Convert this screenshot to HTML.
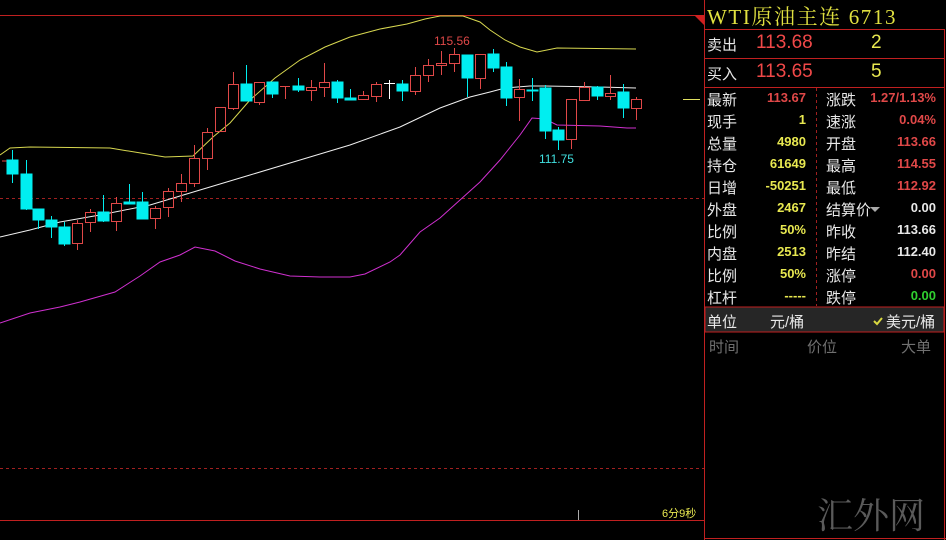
<!DOCTYPE html>
<html><head><meta charset="utf-8"><style>
html,body{margin:0;padding:0;background:#000;width:946px;height:540px;overflow:hidden}
body{position:relative;font-family:"Liberation Sans","Noto Sans CJK SC",sans-serif}
.t{position:absolute;white-space:nowrap}
.l{color:#e8e8e8;font-size:15px}
.v{font-weight:bold;font-size:13px;text-align:right}
</style></head><body>
<svg width="946" height="540" style="position:absolute;left:0;top:0">
<line x1="0" y1="15.5" x2="704" y2="15.5" stroke="#c02020"/>
<polygon points="694,15 704,15 704,25" fill="#d02020"/>
<line x1="0" y1="198.5" x2="704" y2="198.5" stroke="#a02020" stroke-dasharray="3,3"/>
<line x1="0" y1="468.5" x2="704" y2="468.5" stroke="#a02020" stroke-dasharray="3,3"/>
<line x1="0" y1="520.5" x2="704" y2="520.5" stroke="#c02020"/>
<line x1="578.5" y1="510" x2="578.5" y2="520" stroke="#aaa"/>
<line x1="704.5" y1="0" x2="704.5" y2="540" stroke="#c02020"/>
<line x1="944.5" y1="29" x2="944.5" y2="540" stroke="#c02020"/>
<line x1="704" y1="538.5" x2="946" y2="538.5" stroke="#c02020"/>
<line x1="704" y1="29.5" x2="944" y2="29.5" stroke="#c02020"/>
<line x1="704" y1="58.5" x2="944" y2="58.5" stroke="#c02020"/>
<line x1="704" y1="87.5" x2="944" y2="87.5" stroke="#c02020"/>
<line x1="816.5" y1="88" x2="816.5" y2="306" stroke="#a02020" stroke-dasharray="3,3"/>
<rect x="705" y="307" width="239" height="25" fill="#262626" stroke="#c02020"/>
<line x1="683" y1="99.5" x2="700" y2="99.5" stroke="#e0e060"/>
<polyline fill="none" stroke="#d8d850" points="0,155 10,148 30,147 110,148 165,157 193,156 213,137 230,123 250,100 275,78 300,60 325,47 350,37 380,29 407,24 425,19 440,16 463,16 480,22 490,30 505,40 520,47 537,52 557,48 636,49"/>
<polyline fill="none" stroke="#f0f0f0" points="0,237 30,230 60,222 100,215 150,205 200,190 250,175 300,160 350,145 400,127 440,108 470,97 490,92 505,88 530,86 545,86 600,87 636,88"/>
<polyline fill="none" stroke="#d030d0" points="0,323 30,313 60,307 80,302 115,292 140,276 160,262 180,255 195,247 215,251 235,261 260,269 290,276 320,277 350,277 365,274 390,262 400,255 420,232 440,218 460,200 480,182 500,160 520,135 532,118 545,119 557,125 600,126 627,128 636,128"/>
<g stroke-width="1" shape-rendering="crispEdges">
<g stroke="#e04848" fill="none">
<path d="M2,161h5"/>
<rect x="72.5" y="223.5" width="10" height="20"/><path d="M77.5,220v3M77.5,244v6"/>
<rect x="85.5" y="212.5" width="10" height="10"/><path d="M90.5,209v3M90.5,223v9"/>
<rect x="111.5" y="203.5" width="10" height="18"/><path d="M116.5,197v6M116.5,222v9"/>
<rect x="150.5" y="208.5" width="10" height="10"/><path d="M155.5,206v2M155.5,219v10"/>
<rect x="163.5" y="191.5" width="10" height="16"/><path d="M168.5,188v3M168.5,208v9"/>
<rect x="176.5" y="183.5" width="10" height="8"/><path d="M181.5,174v9M181.5,192v10"/>
<rect x="189.5" y="158.5" width="10" height="25"/><path d="M194.5,145v13M194.5,184v3"/>
<rect x="202.5" y="132.5" width="10" height="26"/><path d="M207.5,128v4M207.5,159v11"/>
<rect x="215.5" y="107.5" width="10" height="24"/>
<rect x="228.5" y="84.5" width="10" height="24"/><path d="M233.5,72v12M233.5,109v1"/>
<rect x="254.5" y="82.5" width="10" height="20"/><path d="M259.5,103v2"/>
<path d="M280,86.5h10M285.5,87v12"/>
<rect x="306.5" y="87.5" width="10" height="3"/><path d="M311.5,80v7M311.5,91v10"/>
<rect x="319.5" y="82.5" width="10" height="5"/><path d="M324.5,63v19M324.5,88v9"/>
<rect x="358.5" y="95.5" width="10" height="4"/><path d="M363.5,91v4"/>
<rect x="371.5" y="84.5" width="10" height="12"/><path d="M376.5,82v2M376.5,97v5"/>
<rect x="410.5" y="75.5" width="10" height="16"/><path d="M415.5,67v8M415.5,92v3"/>
<rect x="423.5" y="65.5" width="10" height="10"/><path d="M428.5,59v6M428.5,76v6"/>
<rect x="436.5" y="63.5" width="10" height="2"/><path d="M441.5,51v12M441.5,66v9"/>
<rect x="449.5" y="54.5" width="10" height="9"/><path d="M454.5,48v6M454.5,64v8"/>
<rect x="475.5" y="54.5" width="10" height="24"/><path d="M480.5,79v10"/>
<rect x="514.5" y="89.5" width="10" height="8"/><path d="M519.5,79v10M519.5,98v23"/>
<rect x="566.5" y="99.5" width="10" height="40"/><path d="M571.5,140v9"/>
<rect x="579.5" y="87.5" width="10" height="13"/><path d="M584.5,82v5"/>
<rect x="605.5" y="93.5" width="10" height="3"/><path d="M610.5,75v18M610.5,97v3"/>
<rect x="631.5" y="99.5" width="10" height="9"/><path d="M636.5,97v2M636.5,109v11"/>
</g>
<path d="M384,83.5h11M389.5,80v19" stroke="#fff"/>
<g fill="#00eef0" stroke="#00eef0">
<rect x="7" y="160" width="11" height="14"/><path d="M12.5,150v33" fill="none"/>
<rect x="21" y="174" width="11" height="35"/><path d="M26.5,160v50"/>
<rect x="33" y="209" width="11" height="11"/><path d="M38.5,209v20"/>
<rect x="46" y="220" width="11" height="7"/><path d="M51.5,216v22"/>
<rect x="59" y="227" width="11" height="17"/><path d="M64.5,222v24"/>
<rect x="98" y="212" width="11" height="9"/><path d="M103.5,195v27"/>
<rect x="124" y="202" width="11" height="2"/><path d="M129.5,184v20"/>
<rect x="137" y="202" width="11" height="17"/><path d="M142.5,192v27"/>
<rect x="241" y="84" width="11" height="17"/><path d="M246.5,65v36"/>
<rect x="267" y="82" width="11" height="12"/><path d="M272.5,82v16"/>
<rect x="293" y="86" width="11" height="4"/><path d="M298.5,78v14"/>
<rect x="332" y="82" width="11" height="16"/><path d="M337.5,80v23"/>
<rect x="345" y="98" width="11" height="2"/><path d="M350.5,89v11"/>
<rect x="397" y="84" width="11" height="7"/><path d="M402.5,80v21"/>
<rect x="462" y="55" width="11" height="23"/><path d="M467.5,55v42"/>
<rect x="488" y="54" width="11" height="14"/><path d="M493.5,49v23"/>
<rect x="501" y="67" width="11" height="31"/><path d="M506.5,62v44"/>
<rect x="527" y="90" width="11" height="1"/><path d="M532.5,78v23"/>
<rect x="540" y="88" width="11" height="43"/><path d="M545.5,85v54"/>
<rect x="553" y="130" width="11" height="10"/><path d="M558.5,127v23"/>
<rect x="592" y="87" width="11" height="9"/><path d="M597.5,86v14"/>
<rect x="618" y="92" width="11" height="16"/><path d="M623.5,84v34"/>
</g>
</g>
<text x="434" y="45" fill="#e04848" font-size="12" font-family="Liberation Sans">115.56</text>
<text x="539" y="163" fill="#40e0e0" font-size="12" font-family="Liberation Sans">111.75</text>
<text x="662" y="517" fill="#e8e850" font-size="11" font-family="Liberation Sans,Noto Sans CJK SC">6分9秒</text>
<polygon points="870,207 880,207 875,212" fill="#aaa"/>
<path d="M874,321l3,3 5,-6" stroke="#d8d840" stroke-width="2" fill="none"/>
</svg>
<div class="t" style="left:707px;top:1px;font-size:21px;letter-spacing:1.6px;color:#e0e040;font-family:'Liberation Serif','Noto Serif CJK SC',serif">WTI原油主连 6713</div>
<div class="t l" style="left:707px;top:34px">卖出</div>
<div class="t" style="left:756px;top:32px;font-size:19px;color:#f04848">113.68</div>
<div class="t" style="left:871px;top:32px;font-size:19px;color:#e8e850">2</div>
<div class="t l" style="left:707px;top:63px">买入</div>
<div class="t" style="left:756px;top:61px;font-size:19px;color:#f04848">113.65</div>
<div class="t" style="left:871px;top:61px;font-size:19px;color:#e8e850">5</div>

<div class="t l" style="left:707px;top:89px">最新</div><div class="t v" style="top:90px;color:#e04848;right:140px">113.67</div>
<div class="t l" style="left:826px;top:89px">涨跌</div><div class="t v" style="right:10px;top:90px;color:#e04848">1.27/1.13%</div>
<div class="t l" style="left:707px;top:111px">现手</div><div class="t v" style="right:140px;top:112px;color:#e8e850">1</div>
<div class="t l" style="left:826px;top:111px">速涨</div><div class="t v" style="right:10px;top:112px;color:#e04848">0.04%</div>
<div class="t l" style="left:707px;top:133px">总量</div><div class="t v" style="right:140px;top:134px;color:#e8e850">4980</div>
<div class="t l" style="left:826px;top:133px">开盘</div><div class="t v" style="right:10px;top:134px;color:#e04848">113.66</div>
<div class="t l" style="left:707px;top:155px">持仓</div><div class="t v" style="right:140px;top:156px;color:#e8e850">61649</div>
<div class="t l" style="left:826px;top:155px">最高</div><div class="t v" style="right:10px;top:156px;color:#e04848">114.55</div>
<div class="t l" style="left:707px;top:177px">日增</div><div class="t v" style="right:140px;top:178px;color:#e8e850">-50251</div>
<div class="t l" style="left:826px;top:177px">最低</div><div class="t v" style="right:10px;top:178px;color:#e04848">112.92</div>
<div class="t l" style="left:707px;top:199px">外盘</div><div class="t v" style="right:140px;top:200px;color:#e8e850">2467</div>
<div class="t l" style="left:826px;top:199px">结算价</div><div class="t v" style="right:10px;top:200px;color:#e8e8e8">0.00</div>
<div class="t l" style="left:707px;top:221px">比例</div><div class="t v" style="right:140px;top:222px;color:#e8e850">50%</div>
<div class="t l" style="left:826px;top:221px">昨收</div><div class="t v" style="right:10px;top:222px;color:#e8e8e8">113.66</div>
<div class="t l" style="left:707px;top:243px">内盘</div><div class="t v" style="right:140px;top:244px;color:#e8e850">2513</div>
<div class="t l" style="left:826px;top:243px">昨结</div><div class="t v" style="right:10px;top:244px;color:#e8e8e8">112.40</div>
<div class="t l" style="left:707px;top:265px">比例</div><div class="t v" style="right:140px;top:266px;color:#e8e850">50%</div>
<div class="t l" style="left:826px;top:265px">涨停</div><div class="t v" style="right:10px;top:266px;color:#e04848">0.00</div>
<div class="t l" style="left:707px;top:287px">杠杆</div><div class="t v" style="right:140px;top:288px;color:#e8e850">-----</div>
<div class="t l" style="left:826px;top:287px">跌停</div><div class="t v" style="right:10px;top:288px;color:#30d030">0.00</div>

<div class="t l" style="left:707px;top:311px">单位</div>
<div class="t l" style="left:770px;top:311px">元/桶</div>
<div class="t l" style="left:886px;top:311px">美元/桶</div>
<div class="t" style="left:709px;top:336px;font-size:15px;color:#707070">时间</div>
<div class="t" style="left:807px;top:336px;font-size:15px;color:#707070">价位</div>
<div class="t" style="left:901px;top:336px;font-size:15px;color:#707070">大单</div>
<div class="t" style="left:817px;top:488px;font-size:36px;color:#5a5a5a;font-family:'Liberation Serif','Noto Serif CJK SC',serif">汇外网</div>
</body></html>
